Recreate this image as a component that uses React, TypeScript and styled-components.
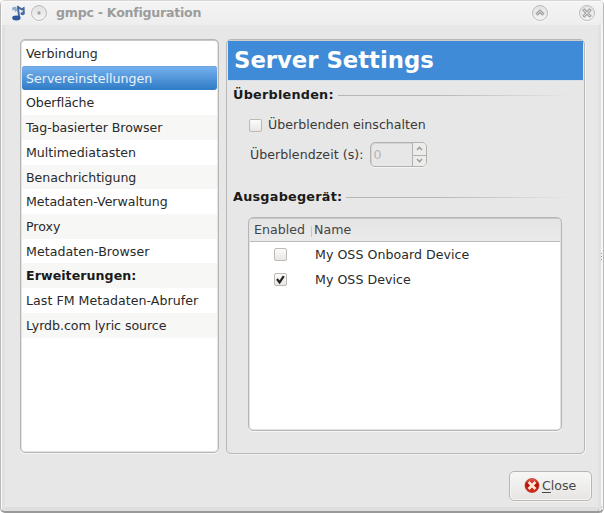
import React from "react";
import styled, { createGlobalStyle } from "styled-components";

const GlobalStyle = createGlobalStyle`
  * { box-sizing: border-box; }
  html, body { margin: 0; padding: 0; }
  body {
    width: 604px;
    height: 513px;
    overflow: hidden;
    background: #fff;
    font: 12.6px/24px "DejaVu Sans", sans-serif;
    color: #2a2a2a;
  }
  svg { display: block; }
`;

const Window = styled.div`
  display: flex;
  flex-direction: column;
  width: 604px;
  height: 513px;
  border: 1px solid #b9b9b9;
  border-top-color: #d6d6d6;
  border-bottom: 2px solid #999;
  border-radius: 5px;
  background: #e7e7e7;
  box-shadow: inset 1px 1px 0 #fafafa, inset -2px 0 0 #f5f5f5,
    inset 4px 0 0 #e1e1e1, inset -5px 0 0 #e1e1e1, inset 0 -4px 0 #dedede;
`;

const TitleBar = styled.header`
  display: flex;
  align-items: center;
  height: 24px;
  padding: 0 8px 0 10px;
  flex: none;
  border-radius: 4px 4px 0 0;
  background: linear-gradient(#f4f4f4, #eeeeee);
  box-shadow: inset 1px 1px 0 #fafafa;
`;

const AppIcon = styled.svg`
  margin-right: 5px;
`;

const Title = styled.h1`
  flex: 1;
  margin: 0 0 0 9px;
  font-size: 12.6px;
  line-height: 24px;
  font-weight: bold;
  color: #9c9c9c;
  letter-spacing: -0.25px;
`;

const RoundButton = styled.button<{ $gap?: number }>`
  display: flex;
  align-items: center;
  justify-content: center;
  width: 16px;
  height: 16px;
  margin: 0 ${(p) => p.$gap ?? 0}px 0 0;
  padding: 0;
  border: 1px solid #bcbcbc;
  border-radius: 50%;
  background: linear-gradient(#e2e2e2, #f4f4f4);
  box-shadow: 0 1px 0 #fafafa;
`;

const Body = styled.main`
  display: flex;
  gap: 7px;
  height: 416px;
  margin: 14px 17px 0 19px;
  flex: none;
`;

const Sidebar = styled.nav`
  width: 199px;
  height: 414px;
  padding: 1px 1px 0;
  border: 1px solid #b8b6b4;
  border-radius: 5px;
  background: #fff;
  box-shadow: inset 0 1px 0 #c9c8c6, inset 0 0 0 1px #e3e3e3, 0 1px 0 #f6f6f6;
`;

const NavList = styled.ul`
  list-style: none;
  margin: 0;
  padding: 0;
`;

const NavItem = styled.li<{ $selected?: boolean; $heading?: boolean; $track?: number }>`
  height: 24.73px;
  line-height: 26.6px;
  padding-left: 4px;
  white-space: nowrap;
  letter-spacing: ${(p) => p.$track ?? 0}px;
  font-weight: ${(p) => (p.$heading ? "bold" : "normal")};
  color: ${(p) => (p.$heading ? "#1a1a1a" : "inherit")};
  &:nth-child(even) { background: #f7f7f6; }
  ${(p) =>
    p.$selected &&
    `&&& {
      color: #e9f2fb;
      border-radius: 3px;
      background: linear-gradient(#77b2ef, #2f7bc6);
      box-shadow: inset 0 1px 0 #6ba5e0;
    }`}
`;

const Panel = styled.section`
  width: 359px;
  height: 415px;
  padding: 1px;
  border: 1px solid #b8b8b8;
  border-radius: 5px;
  box-shadow: 1px 1px 0 #f2f2f2, inset 0 1px 0 #cfcecc;
`;

const Banner = styled.h2`
  height: 40px;
  margin: 0;
  padding-left: 6px;
  border-bottom: 1px solid #d5deea;
  background: #408bd7;
  color: #fff;
  font-size: 22.75px;
  line-height: 39px;
  font-weight: bold;
`;

const SectionTitle = styled.h3<{ $space?: number }>`
  display: flex;
  align-items: center;
  gap: 4px;
  height: 20px;
  margin: ${(p) => p.$space ?? 4}px 12px 0 5px;
  font-size: 12.8px;
  line-height: 20px;
  letter-spacing: 0.24px;
  color: #1a1a1a;
  &::after {
    content: "";
    flex: 1;
    height: 1px;
    background: linear-gradient(90deg, #b6b6b6 40%, #e7e7e7);
  }
`;

const OptionRow = styled.label<{ $top: number; $height: number }>`
  display: flex;
  align-items: center;
  height: ${(p) => p.$height}px;
  margin: ${(p) => p.$top}px 0 0 21px;
  color: #3a3a3a;
`;

const Box = styled.span`
  display: flex;
  align-items: center;
  justify-content: center;
  flex: none;
  width: 13px;
  height: 13px;
  border: 1px solid #bdb9b5;
  border-radius: 2px;
  background: linear-gradient(#fbfbfa, #e8e7e6);
`;

const OptionText = styled.span<{ $left?: number; $track?: number }>`
  margin-left: ${(p) => p.$left ?? 0}px;
  letter-spacing: ${(p) => p.$track ?? 0}px;
`;

const Spinner = styled.span`
  display: flex;
  width: 57px;
  height: 25px;
  margin-left: 6px;
  border: 1px solid #b4b0ad;
  border-radius: 5px;
  box-shadow: inset 1px 1px 0 #d6d4d2, 0 1px 0 #f5f5f5;
  color: #b5b5b5;
`;

const SpinValue = styled.span`
  flex: 1;
  padding-left: 3px;
  line-height: 23px;
`;

const SpinButtons = styled.span`
  display: grid;
  grid-template-rows: 1fr 1fr;
  width: 14px;
  border-left: 1px solid #b4b0ad;
  border-radius: 0 4px 4px 0;
  background: #ececeb;
`;

const SpinStep = styled.span`
  display: flex;
  align-items: center;
  justify-content: center;
  & + & { border-top: 1px solid #b4b0ad; }
`;

const DeviceTable = styled.div`
  width: 314px;
  height: 214px;
  margin: 10px 0 0 20px;
  padding: 1px;
  border: 1px solid #b8b6b4;
  border-radius: 5px;
  background: #fff;
  overflow: hidden;
  box-shadow: inset 0 1px 0 #c9c8c6, inset 0 0 0 1px #e3e3e3, 0 1px 0 #f6f6f6;
`;

const HeaderRow = styled.div`
  display: grid;
  grid-template-columns: 61px 1fr;
  height: 23px;
  border-bottom: 1px solid #bdbbb9;
  background: linear-gradient(#e4e4e4, #ebebeb);
  color: #454545;
  line-height: 22px;
`;

const HeaderCell = styled.span`
  position: relative;
  padding-left: 4px;
  & + & { padding-left: 3px; }
  & + &::before {
    content: "";
    position: absolute;
    left: 0;
    top: 7px;
    width: 1px;
    height: 11px;
    background: #c6c6c6;
  }
`;

const DeviceRow = styled.div`
  display: grid;
  grid-template-columns: 65px 1fr;
  align-items: center;
  height: 25px;
  letter-spacing: 0.03px;
  ${Box} { margin-left: 24px; }
`;

const Actions = styled.footer`
  display: flex;
  justify-content: flex-end;
  padding: 16px 11px 0 0;
`;

const CloseButton = styled.button`
  display: flex;
  align-items: center;
  width: 83px;
  height: 30px;
  padding: 0 0 0 14px;
  border: 1px solid #b8b5b2;
  border-radius: 5px;
  background: linear-gradient(#f7f7f6, #e6e5e3);
  box-shadow: inset 0 0 0 1px #f6f6f5, 0 1px 0 #f5f5f5;
  color: #484848;
  font: 12.6px/28px "DejaVu Sans", sans-serif;
`;

const CloseText = styled.span`
  margin-left: 2px;
  u { text-underline-offset: 2px; text-decoration-thickness: 1px; }
`;

const Grip = styled.div<{ $corner?: boolean }>`
  position: absolute;
  left: ${(p) => (p.$corner ? 596 : 600)}px;
  top: ${(p) => (p.$corner ? 506 : 252)}px;
`;

const navItems: { text: string; selected?: boolean; heading?: boolean; track?: number }[] = [
  { text: "Verbindung", track: -0.02 },
  { text: "Servereinstellungen", selected: true },
  { text: "Oberfläche", track: -0.1 },
  { text: "Tag-basierter Browser", track: -0.05 },
  { text: "Multimediatasten" },
  { text: "Benachrichtigung", track: -0.04 },
  { text: "Metadaten-Verwaltung", track: -0.04 },
  { text: "Proxy" },
  { text: "Metadaten-Browser", track: 0.04 },
  { text: "Erweiterungen:", heading: true, track: 0.06 },
  { text: "Last FM Metadaten-Abrufer", track: 0.03 },
  { text: "Lyrdb.com lyric source", track: -0.05 },
];

const devices = [
  { name: "My OSS Onboard Device", enabled: false },
  { name: "My OSS Device", enabled: true },
];

const Check = () => (
  <svg width="11" height="11" viewBox="0 0 11 11">
    <path d="M2 5 L4.6 8.4 L8.8 2.2" fill="none" stroke="#222" strokeWidth="2.2" />
  </svg>
);

const StepArrow = ({ down }: { down?: boolean }) => (
  <svg width="7" height="5" viewBox="0 0 7 5">
    <path d={down ? "M1 1 L3.5 3.8 L6 1" : "M1 4 L3.5 1.2 L6 4"} fill="none" stroke="#999" strokeWidth="1.4" />
  </svg>
);

export default function App() {
  return (
    <>
      <GlobalStyle />
      <Window>
        <TitleBar>
          <AppIcon width="15" height="16" viewBox="0 0 15 16">
            <path d="M1 2.6 L5 1.8 L6.4 5.6 L4 7.2 L3.6 5 L1.4 5.4Z" fill="#8fabce" />
            <path d="M6.8 .8 L8.2 12.8" fill="none" stroke="#47699e" strokeWidth="2" />
            <path d="M7.4 2.4 L10.8 4.4 L12.6 3.2 L12.8 8.6" fill="none" stroke="#47699e" strokeWidth="2" />
            <ellipse cx="5.4" cy="13" rx="4.2" ry="2.4" fill="#2d569b" />
            <ellipse cx="11.6" cy="8.6" rx="2.1" ry="1.6" fill="#416aab" />
          </AppIcon>
          <RoundButton aria-label="Menu">
            <svg width="4" height="4"><circle cx="2" cy="2" r="1.7" fill="#a6a6a6" /></svg>
          </RoundButton>
          <Title>gmpc - Konfiguration</Title>
          <RoundButton $gap={31} aria-label="Shade">
            <svg width="10" height="8" viewBox="0 0 10 8">
              <path d="M1.5 5.7 L5 2.3 L8.5 5.7" fill="none" stroke="#9e9e9e" strokeWidth="3" />
              <path d="M1.8 5.4 L5 2.3 L8.2 5.4" fill="none" stroke="#ddd" strokeWidth="1" />
            </svg>
          </RoundButton>
          <RoundButton aria-label="Close window">
            <svg width="10" height="10" viewBox="0 0 10 10">
              <path d="M1.3 1.3 L8.7 8.7 M8.7 1.3 L1.3 8.7" stroke="#999" strokeWidth="3" />
              <path d="M1.8 1.8 L8.2 8.2 M8.2 1.8 L1.8 8.2" stroke="#ddd" strokeWidth="1.2" />
            </svg>
          </RoundButton>
        </TitleBar>
        <Body>
          <Sidebar>
            <NavList>
              {navItems.map((item) => (
                <NavItem key={item.text} $selected={item.selected} $heading={item.heading} $track={item.track}>
                  {item.text}
                </NavItem>
              ))}
            </NavList>
          </Sidebar>
          <Panel>
            <Banner>Server Settings</Banner>
            <SectionTitle>Überblenden:</SectionTitle>
            <OptionRow $top={10} $height={20}>
              <Box />
              <OptionText $left={6}>Überblenden einschalten</OptionText>
            </OptionRow>
            <OptionRow $top={7} $height={25}>
              <OptionText $left={1} $track={0.04}>Überblendzeit (s):</OptionText>
              <Spinner>
                <SpinValue>0</SpinValue>
                <SpinButtons>
                  <SpinStep><StepArrow /></SpinStep>
                  <SpinStep><StepArrow down /></SpinStep>
                </SpinButtons>
              </Spinner>
            </OptionRow>
            <SectionTitle $space={20}>Ausgabegerät:</SectionTitle>
            <DeviceTable>
              <HeaderRow>
                <HeaderCell>Enabled</HeaderCell>
                <HeaderCell>Name</HeaderCell>
              </HeaderRow>
              {devices.map((d) => (
                <DeviceRow key={d.name}>
                  <Box>{d.enabled && <Check />}</Box>
                  <span>{d.name}</span>
                </DeviceRow>
              ))}
            </DeviceTable>
          </Panel>
        </Body>
        <Actions>
          <CloseButton>
            <svg width="16" height="16" viewBox="0 0 16 16">
              <defs>
                <linearGradient id="red" x2="0" y2="1">
                  <stop stopColor="#ef6a55" />
                  <stop offset=".4" stopColor="#b80d08" />
                  <stop offset="1" stopColor="#d9301c" />
                </linearGradient>
              </defs>
              <circle cx="8" cy="7.5" r="7" fill="url(#red)" stroke="#b3382c" strokeWidth=".8" />
              <path d="M4.6 4.1 L11.4 10.9 M11.4 4.1 L4.6 10.9" stroke="#ffe6d2" strokeWidth="2.8" />
            </svg>
            <CloseText><u>C</u>lose</CloseText>
          </CloseButton>
        </Actions>
      </Window>
      <Grip>
        <svg width="3" height="14"><path d="M1 4.5h1M1 7.5h1M1 1.5h1" stroke="#999" /></svg>
      </Grip>
      <Grip $corner>
        <svg width="8" height="7"><path d="M5 1h1M5 4h1M2 4h1M2 6h1M5 6h1" stroke="#999" /></svg>
      </Grip>
    </>
  );
}
